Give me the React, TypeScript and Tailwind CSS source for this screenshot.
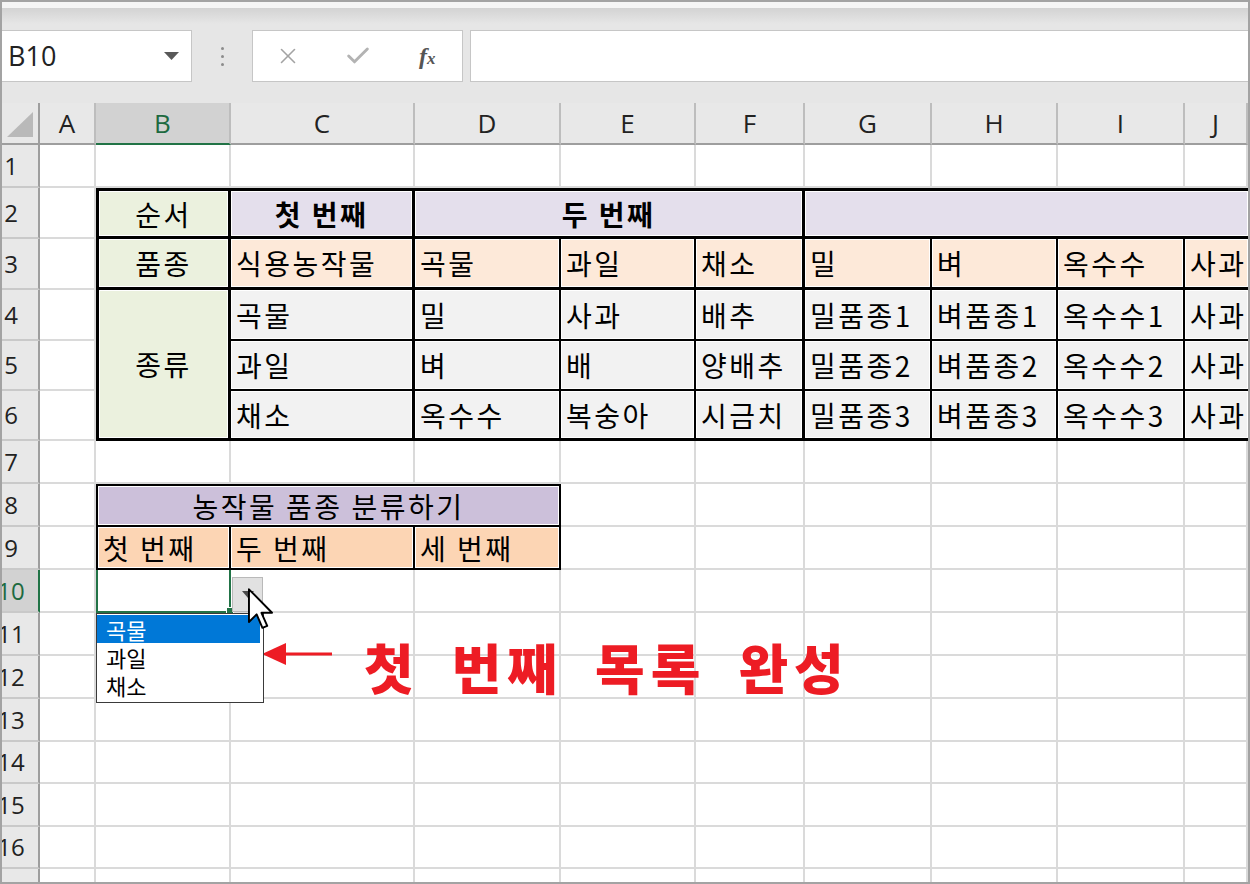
import { X, Check } from 'lucide-react';

type Cell = { t?: string; c: string };

const COLS = ['A', 'B', 'C', 'D', 'E', 'F', 'G', 'H', 'I', 'J'];
const ROWS = Array.from({ length: 17 }, (_, i) => i + 1);

const green = 'bg-[#ebf1de]';
const lav = 'bg-[#e4dfec]';
const peach = 'bg-[#fde9d9]';
const gray = 'bg-[#f2f2f2]';
const grid = 'border-r-2 border-b-2 border-[#dadada]';
const tcell = 'flex items-center px-[5px] whitespace-nowrap overflow-hidden border-black text-black text-[28px] tracking-[2.5px] shadow-[inset_0_0_0_1px_#fff]';

// merged-over cells are null
const cells: Record<string, Cell | null> = {
    B2: { t: '순서', c: `border-[3px] ${green} justify-center` },
    C2: { t: '첫 번째', c: `border-t-[3px] border-r-[3px] border-b-[3px] ${lav} justify-center font-bold` },
    D2: { t: '두 번째', c: `col-span-3 border-t-[3px] border-r-[3px] border-b-[3px] ${lav} justify-center font-bold` },
    E2: null,
    F2: null,
    G2: { c: `col-span-4 border-t-[3px] border-b-[3px] ${lav}` },
    H2: null,
    I2: null,
    J2: null,

    B3: { t: '품종', c: `border-l-[3px] border-r-[3px] border-b-[3px] ${green} justify-center` },
    C3: { t: '식용농작물', c: `border-r-[3px] border-b-[3px] ${peach}` },
    D3: { t: '곡물', c: `border-r-2 border-b-[3px] ${peach}` },
    E3: { t: '과일', c: `border-r-2 border-b-[3px] ${peach}` },
    F3: { t: '채소', c: `border-r-[3px] border-b-[3px] ${peach}` },
    G3: { t: '밀', c: `border-r-2 border-b-[3px] ${peach}` },
    H3: { t: '벼', c: `border-r-2 border-b-[3px] ${peach}` },
    I3: { t: '옥수수', c: `border-r-2 border-b-[3px] ${peach}` },
    J3: { t: '사과', c: `border-b-[3px] ${peach}` },

    B4: { t: '종류', c: `row-span-3 border-l-[3px] border-r-[3px] border-b-[3px] ${green} justify-center` },
    C4: { t: '곡물', c: `border-r-[3px] border-b-2 ${gray}` },
    D4: { t: '밀', c: `border-r-2 border-b-2 ${gray}` },
    E4: { t: '사과', c: `border-r-2 border-b-2 ${gray}` },
    F4: { t: '배추', c: `border-r-[3px] border-b-2 ${gray}` },
    G4: { t: '밀품종1', c: `border-r-2 border-b-2 ${gray}` },
    H4: { t: '벼품종1', c: `border-r-2 border-b-2 ${gray}` },
    I4: { t: '옥수수1', c: `border-r-2 border-b-2 ${gray}` },
    J4: { t: '사과', c: `border-b-2 ${gray}` },

    B5: null,
    C5: { t: '과일', c: `border-r-[3px] border-b-2 ${gray}` },
    D5: { t: '벼', c: `border-r-2 border-b-2 ${gray}` },
    E5: { t: '배', c: `border-r-2 border-b-2 ${gray}` },
    F5: { t: '양배추', c: `border-r-[3px] border-b-2 ${gray}` },
    G5: { t: '밀품종2', c: `border-r-2 border-b-2 ${gray}` },
    H5: { t: '벼품종2', c: `border-r-2 border-b-2 ${gray}` },
    I5: { t: '옥수수2', c: `border-r-2 border-b-2 ${gray}` },
    J5: { t: '사과', c: `border-b-2 ${gray}` },

    B6: null,
    C6: { t: '채소', c: `border-r-[3px] border-b-[3px] ${gray}` },
    D6: { t: '옥수수', c: `border-r-2 border-b-[3px] ${gray}` },
    E6: { t: '복숭아', c: `border-r-2 border-b-[3px] ${gray}` },
    F6: { t: '시금치', c: `border-r-[3px] border-b-[3px] ${gray}` },
    G6: { t: '밀품종3', c: `border-r-2 border-b-[3px] ${gray}` },
    H6: { t: '벼품종3', c: `border-r-2 border-b-[3px] ${gray}` },
    I6: { t: '옥수수3', c: `border-r-2 border-b-[3px] ${gray}` },
    J6: { t: '사과', c: `border-b-[3px] ${gray}` },

    B8: { t: '농작물 품종 분류하기', c: 'col-span-3 border-2 bg-[#ccc0da] justify-center' },
    C8: null,
    D8: null,
    B9: { t: '첫 번째', c: 'border-l-2 border-r-2 border-b-2 bg-[#fcd5b4]' },
    C9: { t: '두 번째', c: 'border-r-2 border-b-2 bg-[#fcd5b4]' },
    D9: { t: '세 번째', c: 'border-r-2 border-b-2 bg-[#fcd5b4]' },
};

function ActiveCell() {
    return (
        <div className="relative border-l-2 border-r-2 border-b-2 border-[#217346] z-10">
            {/* fill handle */}
            <div className="absolute left-[128px] top-[37px] w-[8px] h-[8px] bg-[#217346] border border-white" />
            {/* validation dropdown button */}
            <div className="absolute left-[134px] top-[7px] w-[31px] h-[35px] bg-[#e1e1e1] border border-[#b9b9b9] flex items-center justify-center">
                <svg width="12" height="7" viewBox="0 0 12 7">
                    <path d="M0 0h12L6 7z" fill="#4a4a4a" />
                </svg>
            </div>
            {/* list */}
            <div className="absolute -left-[2px] top-[43px] w-[168px] h-[90px] bg-white border border-[#3a3a3a] pt-px text-[22px] leading-none">
                <div className="h-[28px] mr-[3px] bg-[#0078d7] text-white flex items-center pl-[9px]">곡물</div>
                <div className="h-[28px] text-black flex items-center pl-[9px]">과일</div>
                <div className="h-[28px] text-black flex items-center pl-[9px]">채소</div>
            </div>
            {/* mouse pointer */}
            <svg className="absolute left-[150px] top-[18px]" width="25" height="43" viewBox="0 0 13 22">
                <path d="M0.5 0.5v17l4-4 3 7 2.5-1-3-6.8h5.5z" fill="#fff" stroke="#000" strokeWidth="1" strokeLinejoin="round" />
            </svg>
        </div>
    );
}

export default function App() {
    return (
        <div className="w-[1250px] h-[884px] overflow-hidden border-2 border-[#a3a3a3] bg-white font-['Noto_Sans_CJK_KR',sans-serif]">
            {/* title strip + formula bar */}
            <div className="h-[101px] flex flex-col">
                <div className="h-[6px] bg-[#f5f5f5]" />
                <div className="flex-1 bg-[linear-gradient(180deg,#d3d3d3_0px,#e6e6e6_16px)] pt-[22px]">
                    <div className="h-[52px] flex">
                        <div className="w-[190px] bg-white border border-l-0 border-[#c6c6c6] flex items-center justify-between pl-[6px] pr-[12px]">
                            <span className="font-['Open_Sans',sans-serif] text-[27px] text-[#222]">B10</span>
                            <svg width="15" height="8" viewBox="0 0 15 8">
                                <path d="M0 0h15L7.5 8z" fill="#595959" />
                            </svg>
                        </div>
                        <div className="w-[60px] flex flex-col items-center justify-center gap-[5px]">
                            <span className="w-[3px] h-[3px] rounded-full bg-[#8c8c8c]" />
                            <span className="w-[3px] h-[3px] rounded-full bg-[#8c8c8c]" />
                            <span className="w-[3px] h-[3px] rounded-full bg-[#8c8c8c]" />
                        </div>
                        <div className="w-[211px] bg-white border border-[#c6c6c6] flex items-center">
                            <div className="w-[70px] flex justify-center">
                                <X className="w-[26px] h-[26px] text-[#a3a3a3]" strokeWidth={1.5} />
                            </div>
                            <div className="w-[70px] flex justify-center">
                                <Check className="w-[28px] h-[28px] text-[#b3b3b3]" strokeWidth={2.5} />
                            </div>
                            <div className="w-[70px] flex justify-center">
                                <span className="font-['Liberation_Serif',serif] italic font-bold text-[24px] text-[#555] leading-none">
                                    f<span className="text-[17px]">x</span>
                                </span>
                            </div>
                        </div>
                        <div className="w-[7px]" />
                        <div className="flex-1 bg-white border border-r-0 border-[#c6c6c6]" />
                    </div>
                </div>
            </div>

            {/* sheet */}
            <div className="relative grid grid-cols-[38px_56px_135px_184px_146px_135px_109px_127px_126px_127px_1fr] grid-rows-[42px_43px_51px_51px_51px_50px_50px_43px_43px_43px_43px_43px_43px_43px_42px_43px_42px_43px]">
                {/* corner */}
                <div className="bg-[#e8e8e8] border-r-2 border-b-2 border-[#9e9e9e] flex items-end justify-end pr-[5px] pb-[6px]">
                    <svg width="26" height="25" viewBox="0 0 26 25">
                        <path d="M26 0v25H0z" fill="#b9b9b9" />
                    </svg>
                </div>
                {COLS.map((col) => (
                    <div
                        key={col}
                        className={
                            col === 'B'
                                ? 'bg-[#d2d2d2] border-r-2 border-r-[#bdbdbd] border-b-2 border-b-[#217346] flex items-center justify-center font-["Open_Sans",sans-serif] text-[26px] text-[#1d6a40]'
                                : 'bg-[#e8e8e8] border-r-2 border-r-[#bdbdbd] border-b-2 border-b-[#9e9e9e] flex items-center justify-center font-["Open_Sans",sans-serif] text-[26px] text-[#222]'
                        }
                    >
                        {col}
                    </div>
                ))}

                {ROWS.map((r) => (
                    <RowCells key={r} r={r} />
                ))}

                {/* annotation */}
                <div className="absolute left-[260px] top-[523px] h-[56px] flex items-center">
                    <svg width="70" height="24" viewBox="0 0 70 24">
                        <path d="M0 12 24 1v22z" fill="#ed1c24" />
                        <rect x="22" y="10.5" width="48" height="3" fill="#ed1c24" />
                    </svg>
                    <div className="ml-[32px] mt-[26px] flex items-center gap-[32px] text-[54px] font-black leading-none tracking-[6px] text-[#ed1c24]">
                        <span>첫</span>
                        <span>번째</span>
                        <span>목록</span>
                        <span>완성</span>
                    </div>
                </div>
            </div>
        </div>
    );
}

function RowCells({ r }: { r: number }) {
    const active = r === 10;
    return (
        <>
            <div
                className={
                    active
                        ? 'bg-[#d2d2d2] border-r-2 border-r-[#217346] border-b-2 border-b-[#c9c9c9] flex items-center justify-center pr-[18px] font-["Open_Sans",sans-serif] text-[24px] text-[#1d6a40]'
                        : 'bg-[#e8e8e8] border-r-2 border-r-[#9e9e9e] border-b-2 border-b-[#c9c9c9] flex items-center justify-center pr-[18px] font-["Open_Sans",sans-serif] text-[24px] text-[#222]'
                }
            >
                {r}
            </div>
            {COLS.map((col) => {
                const key = `${col}${r}`;
                if (key === 'B10') return <ActiveCell key={key} />;
                const cell = cells[key];
                if (cell === null) return null;
                if (!cell) return <div key={key} className={grid} />;
                return (
                    <div key={key} className={`${tcell} ${cell.c}`}>
                        {cell.t}
                    </div>
                );
            })}
        </>
    );
}
